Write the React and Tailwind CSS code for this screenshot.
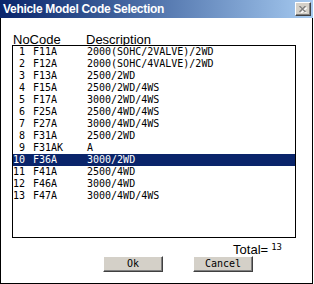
import React from 'react';

const rows = [
  { no: 1, code: 'F11A', desc: '2000(SOHC/2VALVE)/2WD' },
  { no: 2, code: 'F12A', desc: '2000(SOHC/4VALVE)/2WD' },
  { no: 3, code: 'F13A', desc: '2500/2WD' },
  { no: 4, code: 'F15A', desc: '2500/2WD/4WS' },
  { no: 5, code: 'F17A', desc: '3000/2WD/4WS' },
  { no: 6, code: 'F25A', desc: '2500/4WD/4WS' },
  { no: 7, code: 'F27A', desc: '3000/4WD/4WS' },
  { no: 8, code: 'F31A', desc: '2500/2WD' },
  { no: 9, code: 'F31AK', desc: 'A' },
  { no: 10, code: 'F36A', desc: '3000/2WD' },
  { no: 11, code: 'F41A', desc: '2500/4WD' },
  { no: 12, code: 'F46A', desc: '3000/4WD' },
  { no: 13, code: 'F47A', desc: '3000/4WD/4WS' },
];

const selected = 10;

function Button({ label, className }) {
  return (
    <button className={`w-[60px] h-[16px] bg-[#d4d0c8] border-t border-l border-t-white border-l-white border-r border-b border-r-[#404040] border-b-[#404040] shadow-[inset_-1px_-1px_0_#808080] flex items-center justify-center text-[10px] leading-[10px] text-black font-['DejaVu_Sans_Mono',monospace] ${className}`}>
      {label}
    </button>
  );
}

export default function App() {
  return (
    <div className="w-[314px] h-[284px] bg-white overflow-hidden font-['Liberation_Sans',sans-serif]">
      <div className="w-[313px] h-[284px] flex flex-col">
        {/* title bar */}
        <div className="h-[18px] shrink-0 flex items-center justify-between pl-[3px] pr-[2px] bg-gradient-to-r from-[#0a246a] to-[#a6caf0]">
          <span className="text-white font-bold text-[12px] leading-[14px] tracking-[-0.3px]">Vehicle Model Code Selection</span>
          <div className="w-[16px] h-[14px] bg-[#d4d0c8] border-t border-l border-t-white border-l-white border-r border-b border-r-[#404040] border-b-[#404040] shadow-[inset_-1px_-1px_0_#808080] flex items-center justify-center">
            <svg width="8" height="7" viewBox="0 0 8 7">
              <path d="M1 1 L7 7 M7 1 L1 7" stroke="#ffffff" strokeWidth="1.4" transform="translate(0.6,0.6)" />
              <path d="M0.5 0 L6.5 6 M6.5 0 L0.5 6" stroke="#808080" strokeWidth="1.4" />
            </svg>
          </div>
        </div>

        {/* body */}
        <div className="flex-1 flex flex-col border-l border-r border-b border-black">
          <div className="h-[27px] shrink-0 flex items-end pl-[12px] text-[13px] text-black">
            <span className="w-[73px] leading-[11px]">NoCode</span>
            <span className="leading-[11px]">Description</span>
          </div>

          <div className="ml-[11px] w-[284px] h-[193px] shrink-0 border border-black bg-white font-['DejaVu_Sans_Mono',monospace] text-[10px]">
            {rows.map(r => (
              <div
                key={r.no}
                className={`h-[12px] flex leading-[12px] whitespace-pre ${r.no === selected ? 'bg-[#0a246a] text-white' : 'text-black'}`}
              >
                <span className="w-[12px] text-right">{r.no}</span>
                <span className="ml-[8px] w-[54px]">{r.code}</span>
                <span>{r.desc}</span>
              </div>
            ))}
          </div>

          <div className="mt-[6px] h-[12px] shrink-0 flex justify-end items-start pr-[30px] text-black">
            <span className="text-[13px] leading-[12px]">Total=</span>
            <span className="ml-[3px] -mt-[1px] text-[9px] leading-[9px] font-['DejaVu_Sans_Mono',monospace]">13</span>
          </div>

          <div className="flex shrink-0">
            <Button label="Ok" className="ml-[102px]" />
            <Button label="Cancel" className="ml-[30px]" />
          </div>
        </div>
      </div>
    </div>
  );
}
